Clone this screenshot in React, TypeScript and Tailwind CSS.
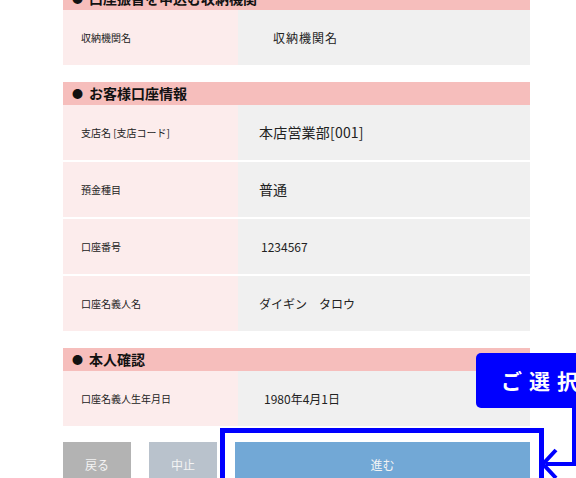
const font = { fontFamily: '"Noto Sans CJK JP", "Liberation Sans", sans-serif' }

type Row = { label: string; value: string; pad: string; size: string }

function Section({ title, rows }: { title: string; rows: Row[] }) {
  return (
    <div className="flex flex-col">
      <div className="h-[23px] bg-[#f6bebc] flex items-center pl-[9px] text-[14px] font-bold text-[#111]">
        <span className="text-[11px] mr-[6px]">●</span>
        {title}
      </div>
      <div className="flex flex-col gap-[2px]">
        {rows.map(r => (
          <div key={r.label} className="flex h-[55px]">
            <div className="w-[175px] bg-[#fcecec] flex items-center pl-[18px] text-[10px] text-[#222]">
              {r.label}
            </div>
            <div className={`flex-1 bg-[#f0f0f0] flex items-center text-[#222] ${r.pad} ${r.size}`}>
              {r.value}
            </div>
          </div>
        ))}
      </div>
    </div>
  )
}

export default function App() {
  return (
    <div className="relative w-[576px] h-[478px] overflow-hidden bg-white" style={font}>
      <div className="ml-[63px] w-[467px] mt-[-13px] flex flex-col gap-[17px]">
        <Section
          title="口座振替を申込む収納機関"
          rows={[{ label: '収納機関名', value: '収納機関名', pad: 'pl-[35px]', size: 'text-[12px] tracking-[1px]' }]}
        />
        <Section
          title="お客様口座情報"
          rows={[
            { label: '支店名 [支店コード]', value: '本店営業部[001]', pad: 'pl-[21px]', size: 'text-[14px] tracking-[0.2px]' },
            { label: '預金種目', value: '普通', pad: 'pl-[21px]', size: 'text-[14px]' },
            { label: '口座番号', value: '1234567', pad: 'pl-[23px]', size: 'text-[12px]' },
            { label: '口座名義人名', value: 'ダイギン　タロウ', pad: 'pl-[21px]', size: 'text-[12px]' },
          ]}
        />
        <Section
          title="本人確認"
          rows={[{ label: '口座名義人生年月日', value: '1980年4月1日', pad: 'pl-[26px]', size: 'text-[12px]' }]}
        />
        <div className="flex gap-[18px] mt-[-1px] h-[46px] text-[12px] text-[#f4f4f4]">
          <div className="w-[68px] bg-[#b3b3b3] flex items-center justify-center">戻る</div>
          <div className="w-[68px] bg-[#b9c2cc] flex items-center justify-center">中止</div>
          <div className="flex-1 bg-[#72a8d6] flex items-center justify-center">進む</div>
        </div>
      </div>

      {/* highlight frame + callout */}
      <div className="absolute left-[220px] top-[428px] w-[324px] h-[70px] border-[5px] border-[#0000ff]" />
      <div className="absolute left-[476px] top-[353px] w-[130px] h-[55px] rounded-[5px] bg-[#0000ff] flex items-center pl-[25px] text-white text-[21px] font-bold tracking-[7px]">
        ご選択
      </div>
      <svg className="absolute left-0 top-0" width="576" height="478">
        <path d="M574 406 V464 H546" fill="none" stroke="#0000ff" strokeWidth="4" />
        <path d="M556 450 L543 464 L556 478" fill="none" stroke="#0000ff" strokeWidth="4" />
      </svg>
    </div>
  )
}
